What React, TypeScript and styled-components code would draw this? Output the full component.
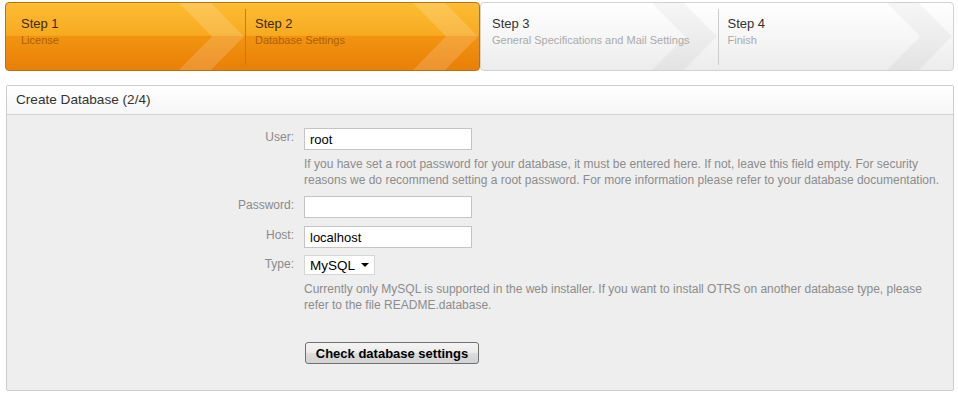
import styled, { createGlobalStyle } from "styled-components";

const GlobalStyle = createGlobalStyle`
  html, body {
    margin: 0;
    padding: 0;
    background: #ffffff;
    font-family: "Liberation Sans", Arial, sans-serif;
  }
`;

const Page = styled.div`
  padding: 2px 4px 0 5px;
`;

const StepBar = styled.div`
  display: flex;
  height: 69px;
`;

const StepGroup = styled.div<{ $active?: boolean }>`
  display: flex;
  flex: ${(p) => (p.$active ? "0 0 475px" : "1")};
  box-sizing: border-box;
  border-radius: 4px;
  overflow: hidden;
  border: 1px solid ${(p) => (p.$active ? "#b8730e" : "#d2d2d2")};
  background: ${(p) =>
    p.$active
      ? "linear-gradient(to bottom, #fcbd34 0%, #f7aa20 48%, #f29410 50%, #e97f08 100%)"
      : "linear-gradient(to bottom, #ffffff 0%, #f6f6f6 50%, #ececec 100%)"};
`;

const Step = styled.div<{ $active?: boolean; $divider?: boolean }>`
  position: relative;
  flex: 1;
  padding: 13px 0 0 ${(p) => (p.$divider ? "10px" : p.$active ? "15px" : "11px")};

  &::before {
    content: "";
    display: ${(p) => (p.$divider ? "block" : "none")};
    position: absolute;
    left: 0;
    top: 6px;
    bottom: 5px;
    width: 1px;
    background: ${(p) => (p.$active ? "#c57c12" : "#cccccc")};
  }
`;

const Chevron = styled.svg`
  position: absolute;
  right: 0;
  top: 0;
  height: 100%;
  width: 66px;
`;

const StepTitle = styled.div<{ $active?: boolean }>`
  position: relative;
  font-size: 13px;
  line-height: 15px;
  color: ${(p) => (p.$active ? "#3d2a0a" : "#333333")};
`;

const StepSub = styled.div<{ $active?: boolean }>`
  position: relative;
  font-size: 11px;
  line-height: 14px;
  margin-top: 2px;
  color: ${(p) => (p.$active ? "#ad5f08" : "#aaaaaa")};
`;

const Panel = styled.div`
  margin: 14px 0 0 1px;
  border: 1px solid #cccccc;
  border-radius: 2px;
  background: #eeeeee;
`;

const PanelHeader = styled.div`
  height: 28px;
  line-height: 28px;
  padding-left: 9px;
  font-size: 13.6px;
  color: #333333;
  background: linear-gradient(to bottom, #ffffff, #f6f6f6);
  border-bottom: 1px solid #d4d4d4;
`;

const PanelBody = styled.div`
  padding: 13px 14px 26px 0;
  display: flex;
  flex-direction: column;
`;

const Row = styled.div<{ $gap?: number }>`
  display: grid;
  grid-template-columns: 287px 1fr;
  column-gap: 10px;
  margin-bottom: ${(p) => p.$gap ?? 0}px;
`;

const Label = styled.label`
  text-align: right;
  font-size: 12px;
  line-height: 16px;
  padding-top: 1px;
  color: #8a8a8a;
`;

const Field = styled.div`
  display: flex;
  flex-direction: column;
  align-items: flex-start;
`;

const TextInput = styled.input`
  box-sizing: border-box;
  width: 168px;
  height: 22px;
  margin: 0;
  padding: 1px 5px 0;
  border: 1px solid #c4c4c4;
  background: #ffffff;
  font-family: "Liberation Sans", Arial, sans-serif;
  font-size: 13px;
  color: #000000;
  outline: none;
`;

const SelectWrap = styled.div`
  position: relative;
  width: 71px;
  height: 20px;

  &::after {
    content: "";
    position: absolute;
    right: 6px;
    top: 8px;
    border-left: 4px solid transparent;
    border-right: 4px solid transparent;
    border-top: 4px solid #000000;
    pointer-events: none;
  }
`;

const Select = styled.select`
  appearance: none;
  box-sizing: border-box;
  width: 100%;
  height: 100%;
  margin: 0;
  padding: 0 0 0 5px;
  border: 1px solid #d6d6d6;
  border-radius: 0;
  background: #ffffff;
  font-family: "Liberation Sans", Arial, sans-serif;
  font-size: 13.5px;
  color: #000000;
  outline: none;
`;

const Hint = styled.p`
  margin: 6px 0 0;
  font-size: 12px;
  line-height: 16px;
  color: #8c8c8c;
`;

const Button = styled.button`
  box-sizing: border-box;
  width: 174px;
  height: 22px;
  margin: 0 0 0 1px;
  padding: 0;
  border: 1px solid #707070;
  border-radius: 3px;
  background: linear-gradient(to bottom, #f4f4f4 0%, #ebebeb 50%, #dddddd 51%, #d2d2d2 100%);
  font-family: "Liberation Sans", Arial, sans-serif;
  font-weight: bold;
  font-size: 13px;
  color: #000000;
`;

const steps = [
  { title: "Step 1", sub: "License", active: true },
  { title: "Step 2", sub: "Database Settings", active: true },
  { title: "Step 3", sub: "General Specifications and Mail Settings", active: false },
  { title: "Step 4", sub: "Finish", active: false },
];

function ChevronMark({ active }: { active: boolean }) {
  return (
    <Chevron viewBox="0 0 66 69" preserveAspectRatio="none">
      <polygon
        points="0,0 32,0 65,34.5 32,69 0,69 33,34.5"
        fill={active ? "rgba(255,255,255,0.16)" : "rgba(0,0,0,0.035)"}
      />
    </Chevron>
  );
}

function StepItem({ step, divider }: { step: (typeof steps)[number]; divider: boolean }) {
  return (
    <Step $active={step.active} $divider={divider}>
      <ChevronMark active={step.active} />
      <StepTitle $active={step.active}>{step.title}</StepTitle>
      <StepSub $active={step.active}>{step.sub}</StepSub>
    </Step>
  );
}

export default function App() {
  return (
    <Page>
      <GlobalStyle />
      <StepBar>
        <StepGroup $active>
          <StepItem step={steps[0]} divider={false} />
          <StepItem step={steps[1]} divider />
        </StepGroup>
        <StepGroup>
          <StepItem step={steps[2]} divider={false} />
          <StepItem step={steps[3]} divider />
        </StepGroup>
      </StepBar>

      <Panel>
        <PanelHeader>Create Database (2/4)</PanelHeader>
        <PanelBody>
          <Row $gap={8}>
            <Label>User:</Label>
            <Field>
              <TextInput defaultValue="root" />
              <Hint>
                If you have set a root password for your database, it must be entered here. If not,
                leave this field empty. For security reasons we do recommend setting a root password.
                For more information please refer to your database documentation.
              </Hint>
            </Field>
          </Row>
          <Row $gap={8}>
            <Label>Password:</Label>
            <Field>
              <TextInput type="password" />
            </Field>
          </Row>
          <Row $gap={7}>
            <Label>Host:</Label>
            <Field>
              <TextInput defaultValue="localhost" />
            </Field>
          </Row>
          <Row $gap={29}>
            <Label>Type:</Label>
            <Field>
              <SelectWrap>
                <Select defaultValue="mysql">
                  <option value="mysql">MySQL</option>
                </Select>
              </SelectWrap>
              <Hint>
                Currently only MySQL is supported in the web installer. If you want to install OTRS
                on another database type, please refer to the file README.database.
              </Hint>
            </Field>
          </Row>
          <Row>
            <span />
            <Field>
              <Button>Check database settings</Button>
            </Field>
          </Row>
        </PanelBody>
      </Panel>
    </Page>
  );
}
